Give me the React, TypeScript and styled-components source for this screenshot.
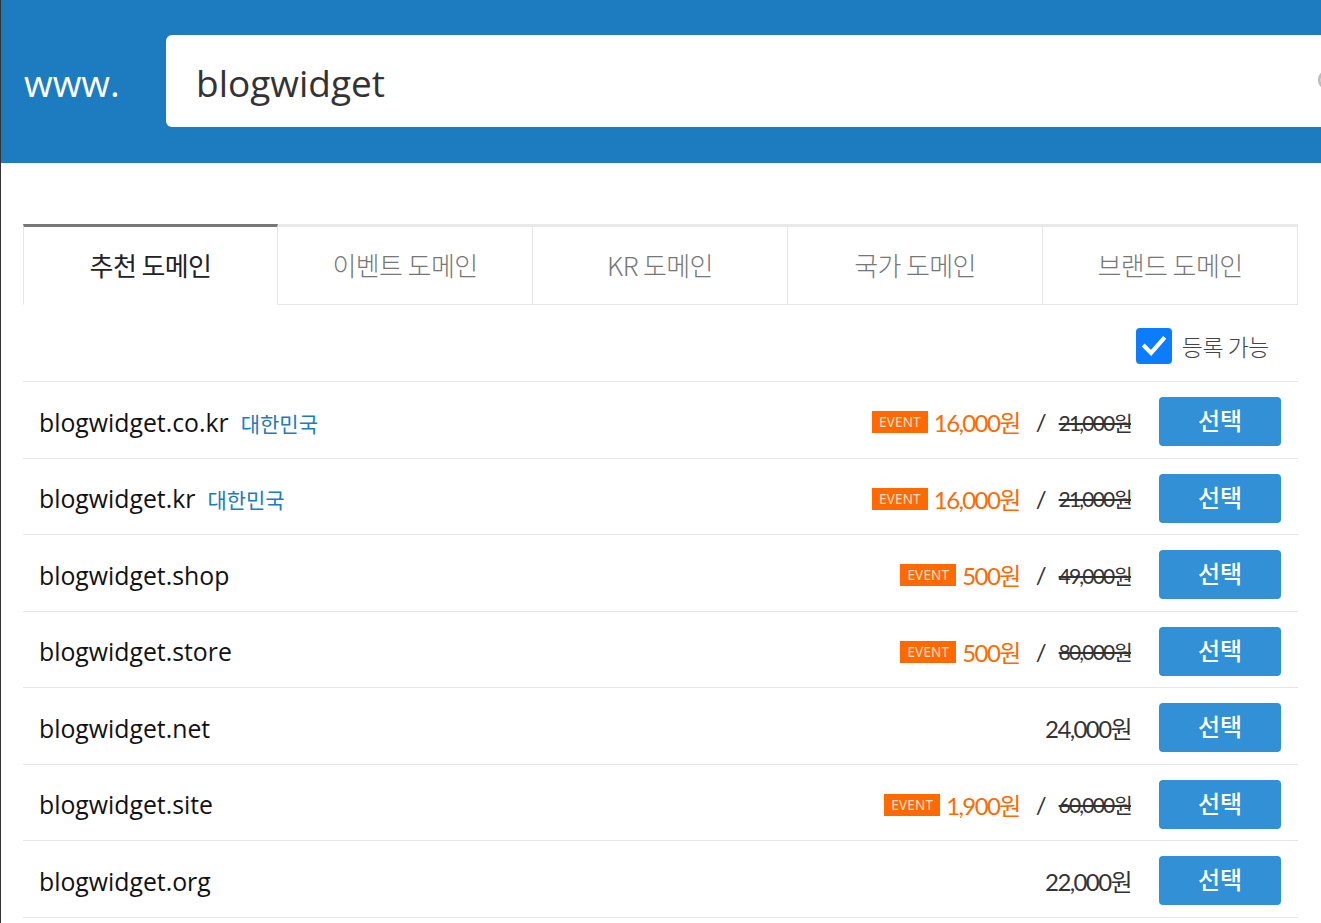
import { useState } from "react";
import styled, { createGlobalStyle } from "styled-components";
import { Search } from "lucide-react";

const GlobalStyle = createGlobalStyle`
  html, body {
    margin: 0;
    padding: 0;
    background: #fff;
    overflow-x: hidden;
  }
  * {
    box-sizing: border-box;
  }
`;

const StyledPage = styled.div`
  width: 1321px;
  min-height: 923px;
  border-left: 1px solid #333;
  font-family: "Noto Sans CJK KR", sans-serif;
  background: #fff;
`;

const StyledHeader = styled.header`
  height: 163px;
  background: #1d7bbf;
  display: flex;
  align-items: center;
  overflow: hidden;
`;

const StyledPrefix = styled.div`
  flex: 0 0 165px;
  padding-left: 23px;
  padding-top: 2px;
  color: #fff;
  font-family: "Open Sans", sans-serif;
  font-size: 37px;
`;

const StyledInputBox = styled.div`
  flex: 0 0 1195px;
  height: 92px;
  margin-top: -1px;
  background: #fff;
  border-radius: 6px;
  display: flex;
  align-items: center;
  justify-content: space-between;
  padding: 0 19px 0 30px;
`;

const StyledInputText = styled.span`
  font-family: "Open Sans", sans-serif;
  font-size: 37px;
  color: #333;
  padding-top: 2px;
`;

const StyledMain = styled.main`
  padding: 61px 23px 0 22px;
`;

const StyledTabs = styled.div`
  display: grid;
  grid-template-columns: repeat(5, 1fr);
  border-top: 3px solid #e9e9e9;
`;

const StyledTab = styled.button<{ $active?: boolean }>`
  height: 81px;
  margin-top: -3px;
  border: 1px solid #e6e6e6;
  border-left-width: ${(p) => (p.$active ? "1px" : "0")};
  border-top: 3px solid ${(p) => (p.$active ? "#777" : "#e9e9e9")};
  border-bottom-color: ${(p) => (p.$active ? "transparent" : "#e6e6e6")};
  background: #fff;
  font-family: "Noto Sans CJK KR", sans-serif;
  font-size: 26px;
  font-weight: ${(p) => (p.$active ? 400 : 300)};
  color: ${(p) => (p.$active ? "#222" : "#777")};
  letter-spacing: -0.6px;
  padding: 0 0 2px;
  cursor: pointer;
`;

const StyledFilterRow = styled.div`
  height: 77px;
  display: flex;
  justify-content: flex-end;
  align-items: center;
  padding: 6px 29px 0 0;
  border-bottom: 1px solid #e6e6e6;
`;

const StyledCheckLabel = styled.label`
  display: flex;
  align-items: center;
  gap: 10px;
  font-size: 23px;
  font-weight: 300;
  color: #444;
  letter-spacing: -0.5px;
  cursor: pointer;
`;

const StyledCheckBox = styled.span<{ $checked: boolean }>`
  width: 36px;
  height: 36px;
  border-radius: 4px;
  background: ${(p) => (p.$checked ? "#0b7dfc" : "#fff")};
  border: ${(p) => (p.$checked ? "none" : "2px solid #888")};
  display: flex;
  align-items: center;
  justify-content: center;
`;

const StyledRow = styled.div`
  height: 76.5px;
  display: flex;
  align-items: center;
  padding: 4px 17px 0 16px;
  border-bottom: 1px solid #e6e6e6;
`;

const StyledName = styled.div`
  flex: 1;
  display: flex;
  align-items: baseline;
  gap: 12px;
`;

const StyledDomain = styled.span`
  font-family: "Open Sans", sans-serif;
  font-size: 24.8px;
  color: #111;
`;

const StyledCountry = styled.span`
  font-family: "Noto Sans CJK KR", sans-serif;
  font-size: 21px;
  color: #1d7bbf;
`;

const StyledPrice = styled.div`
  display: flex;
  align-items: center;
  font-family: "Lato", "Noto Sans CJK KR", sans-serif;
`;

const StyledBadge = styled.span`
  background: #ff6a00;
  color: #ffe0cc;
  font-family: "Noto Sans", sans-serif;
  font-size: 13.5px;
  letter-spacing: 0.2px;
  height: 22px;
  line-height: 22px;
  padding: 0 7px;
  margin-right: 6px;
  margin-top: 1px;
`;

const StyledAmount = styled.span<{ $event?: boolean }>`
  font-size: 24px;
  letter-spacing: -1.6px;
  color: ${(p) => (p.$event ? "#ff6a00" : "#333")};
`;

const StyledSlash = styled.span`
  font-size: 24px;
  color: #333;
  margin: 0 12px 0 16px;
`;

const StyledOld = styled.span`
  font-size: 21px;
  letter-spacing: -1.8px;
  color: #333;
  text-decoration: line-through;
  text-decoration-thickness: 2px;
`;

const StyledSelect = styled.button`
  width: 122px;
  height: 49px;
  margin-left: 28px;
  border: none;
  border-radius: 4px;
  background: #3190d6;
  color: #fff;
  font-family: "Noto Sans CJK KR", sans-serif;
  font-size: 24px;
  font-weight: 500;
  padding-bottom: 5px;
  cursor: pointer;
`;

interface IDomain {
  name: string;
  country?: string;
  price: string;
  oldPrice?: string;
}

const tabs = ["추천 도메인", "이벤트 도메인", "KR 도메인", "국가 도메인", "브랜드 도메인"];

const domains: IDomain[] = [
  { name: "blogwidget.co.kr", country: "대한민국", price: "16,000원", oldPrice: "21,000원" },
  { name: "blogwidget.kr", country: "대한민국", price: "16,000원", oldPrice: "21,000원" },
  { name: "blogwidget.shop", price: "500원", oldPrice: "49,000원" },
  { name: "blogwidget.store", price: "500원", oldPrice: "80,000원" },
  { name: "blogwidget.net", price: "24,000원" },
  { name: "blogwidget.site", price: "1,900원", oldPrice: "60,000원" },
  { name: "blogwidget.org", price: "22,000원" },
];

export default function App() {
  const [activeTab, setActiveTab] = useState(0);
  const [onlyAvailable, setOnlyAvailable] = useState(true);

  return (
    <>
      <GlobalStyle />
      <StyledPage>
        <StyledHeader>
          <StyledPrefix>www.</StyledPrefix>
          <StyledInputBox>
            <StyledInputText>blogwidget</StyledInputText>
            <Search size={26} color="#bbb" strokeWidth={2.5} />
          </StyledInputBox>
        </StyledHeader>
        <StyledMain>
          <StyledTabs>
            {tabs.map((t, i) => (
              <StyledTab key={t} $active={i === activeTab} onClick={() => setActiveTab(i)}>
                {t}
              </StyledTab>
            ))}
          </StyledTabs>
          <StyledFilterRow>
            <StyledCheckLabel onClick={() => setOnlyAvailable((v) => !v)}>
              <StyledCheckBox $checked={onlyAvailable}>
                {onlyAvailable && (
                  <svg width="28" height="28" viewBox="0 0 24 24">
                    <path
                      d="M4 12.5 L9.5 18 L20 6"
                      fill="none"
                      stroke="#fff"
                      strokeWidth="3.6"
                      strokeLinecap="square"
                    />
                  </svg>
                )}
              </StyledCheckBox>
              등록 가능
            </StyledCheckLabel>
          </StyledFilterRow>
          {domains.map((d) => (
            <StyledRow key={d.name}>
              <StyledName>
                <StyledDomain>{d.name}</StyledDomain>
                {d.country && <StyledCountry>{d.country}</StyledCountry>}
              </StyledName>
              <StyledPrice>
                {d.oldPrice && <StyledBadge>EVENT</StyledBadge>}
                <StyledAmount $event={!!d.oldPrice}>{d.price}</StyledAmount>
                {d.oldPrice && (
                  <>
                    <StyledSlash>/</StyledSlash>
                    <StyledOld>{d.oldPrice}</StyledOld>
                  </>
                )}
              </StyledPrice>
              <StyledSelect>선택</StyledSelect>
            </StyledRow>
          ))}
        </StyledMain>
      </StyledPage>
    </>
  );
}
